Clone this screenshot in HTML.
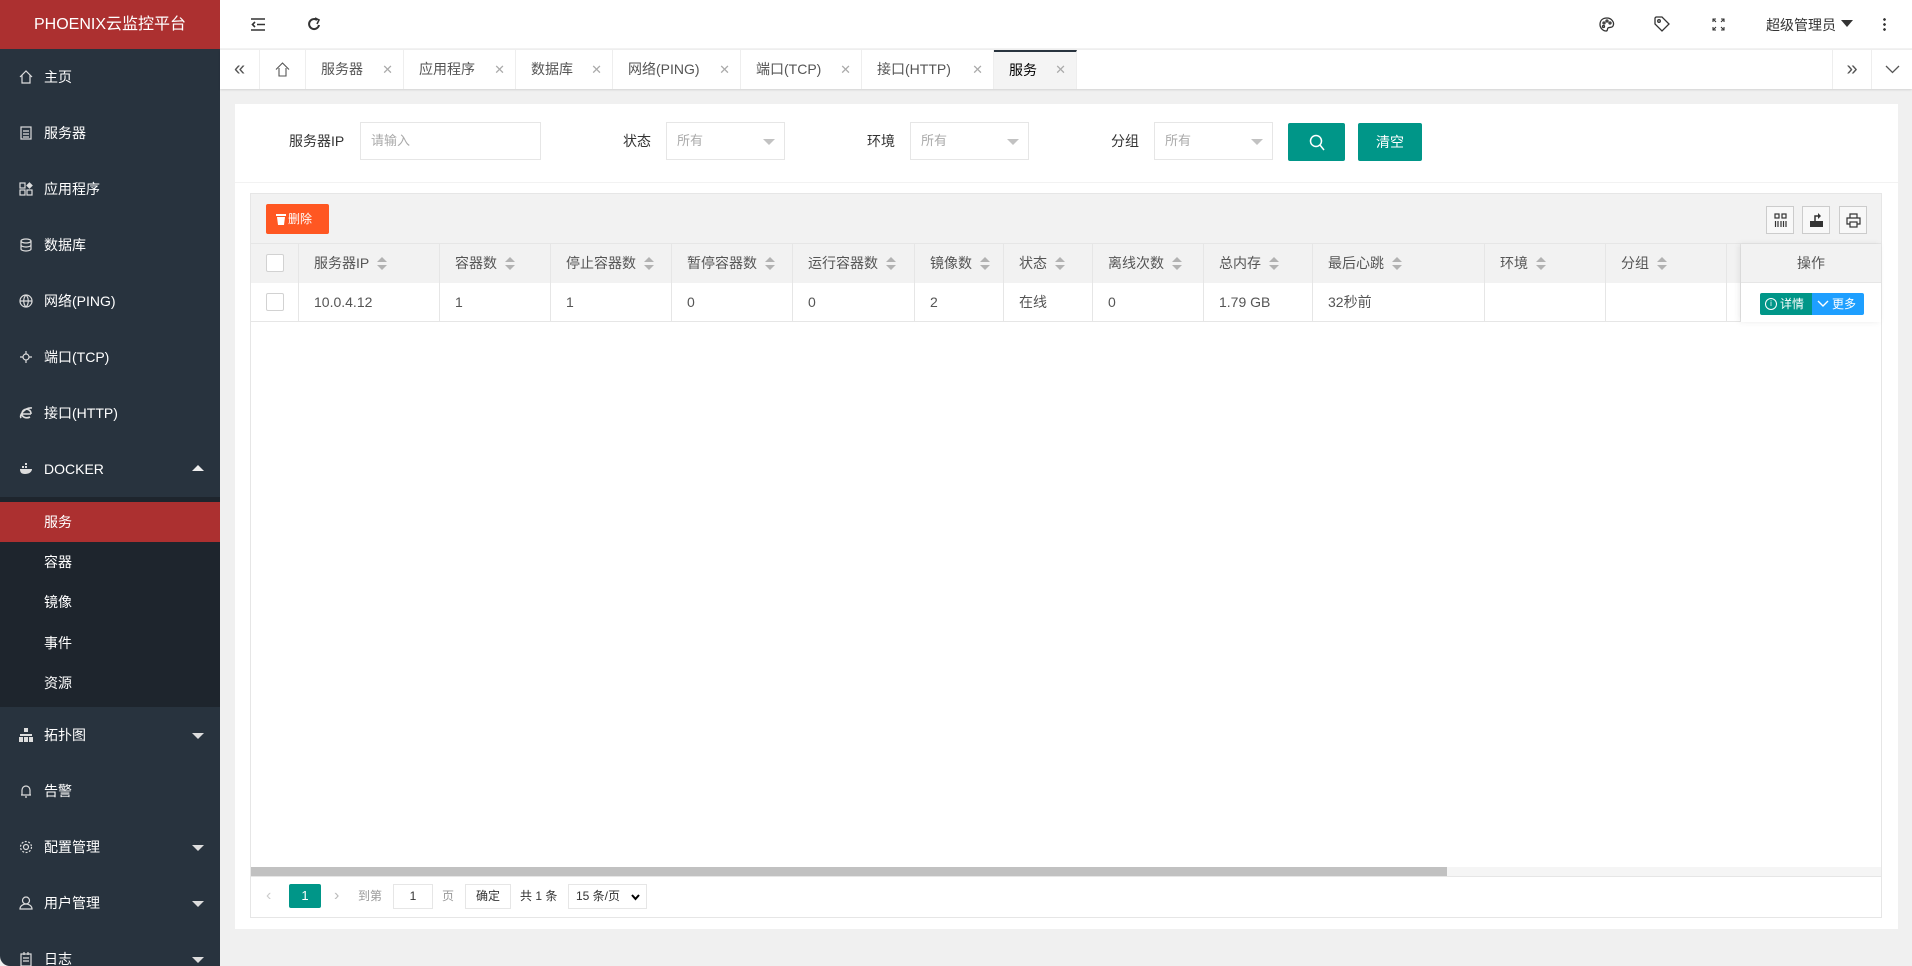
<!DOCTYPE html>
<html><head><meta charset="utf-8">
<style>
*{box-sizing:border-box;margin:0;padding:0}
body{width:1912px;height:966px;overflow:hidden;background:#f0f0f0;font-family:"Liberation Sans","Noto Sans CJK SC",sans-serif;font-size:14px;color:#333;position:relative}
.a{position:absolute}
#side{left:0;top:0;width:220px;height:966px;background:#28333e;border-radius:0 0 0 10px;overflow:hidden}
#logo{left:0;top:0;width:220px;height:49px;background:#ac3030;color:#fff;font-size:16px;text-align:center;line-height:49px}
.mi{position:absolute;left:0;width:220px;height:56px;line-height:56px;color:#fff;font-size:14px;padding-left:44px}
.mi svg{position:absolute;left:19px;top:21px}
.car{position:absolute;right:16px;top:26px;width:0;height:0;border-left:6px solid transparent;border-right:6px solid transparent;border-top:6px solid #ddd}
.car.up{border-top:none;border-bottom:6px solid #eee;top:24px}
#sub{left:0;top:497px;width:220px;height:210px;background:#1e252d}
.si{position:absolute;left:0;width:220px;height:40px;line-height:40px;padding-left:44px;color:#fff;font-size:14px}
#hdr{left:220px;top:0;width:1692px;height:49px;background:#fff;border-bottom:1px solid #f2f2f2}
#tabs{left:220px;top:50px;width:1692px;height:39px;background:#fff;box-shadow:0 1px 2px rgba(0,0,0,.12)}
.tb{position:absolute;top:0;height:39px;line-height:39px;border-right:1px solid #eee;color:#555;font-size:14px;padding-left:15px}
.tb .x{position:absolute;right:10px;color:#aaa;font-size:13px}
#card{left:235px;top:104px;width:1663px;height:825px;background:#fff}
.lbl{position:absolute;top:122px;line-height:38px;font-size:14px;color:#333}
.inp{position:absolute;top:122px;height:38px;border:1px solid #e6e6e6;line-height:36px;padding-left:10px;color:#aaa;font-size:13px;background:#fff}
.inp .tri{position:absolute;right:9px;top:16px;border-left:6px solid transparent;border-right:6px solid transparent;border-top:6px solid #c2c2c2}
.btn{position:absolute;top:123px;height:38px;background:#009688;color:#fff;border-radius:2px;text-align:center;line-height:38px;font-size:14px}
#tbl{left:250px;top:193px;width:1632px;height:725px;border:1px solid #e6e6e6;background:#fff}
.th{position:absolute;top:244px;height:39px;line-height:39px;font-size:14px;color:#555;padding-left:15px;border-right:1px solid #e6e6e6;background:#f2f2f2}
.td{position:absolute;top:283px;height:39px;line-height:39px;font-size:14px;color:#555;padding-left:15px;border-right:1px solid #e6e6e6;border-bottom:1px solid #e6e6e6}
.srt{display:inline-block;vertical-align:middle;margin-left:8px;width:10px;height:14px;position:relative}
.srt:before{content:"";position:absolute;left:0;top:0;border-left:5px solid transparent;border-right:5px solid transparent;border-bottom:5px solid #b2b2b2}
.srt:after{content:"";position:absolute;left:0;top:8px;border-left:5px solid transparent;border-right:5px solid transparent;border-top:5px solid #b2b2b2}
.cb{position:absolute;width:18px;height:18px;border:1px solid #d2d2d2;background:#fff;border-radius:2px}
.ti{position:absolute;top:206px;width:28px;height:28px;border:1px solid #ccc;background:#f8f8f8}
</style></head><body>
<div id="side" class="a">
<div id="logo" class="a">PHOENIX云监控平台</div>
<div class="mi" style="top:49px"><svg width="14" height="14" viewBox="0 0 14 14" fill="none" stroke="#ddd" stroke-width="1.2"><path d="M1 7L7 1l6 6M3 5v8h8V5"/></svg>主页</div>
<div class="mi" style="top:105px"><svg width="14" height="14" viewBox="0 0 14 14" fill="none" stroke="#ddd" stroke-width="1.2"><rect x="2" y="1" width="10" height="12"/><path d="M4 5h6M4 8h6M4 11h6"/></svg>服务器</div>
<div class="mi" style="top:161px"><svg width="14" height="14" viewBox="0 0 14 14" fill="none" stroke="#ddd" stroke-width="1.2"><rect x="1" y="1" width="5" height="5"/><rect x="1" y="8" width="5" height="5"/><rect x="8" y="8" width="5" height="5"/><path d="M10.5 1l2.5 2.5-2.5 2.5-2.5-2.5z" fill="#ddd"/></svg>应用程序</div>
<div class="mi" style="top:217px"><svg width="14" height="14" viewBox="0 0 14 14" fill="none" stroke="#ddd" stroke-width="1.2"><ellipse cx="7" cy="3" rx="5" ry="2"/><path d="M2 3v8c0 1 2 2 5 2s5-1 5-2V3M2 7c0 1 2 2 5 2s5-1 5-2"/></svg>数据库</div>
<div class="mi" style="top:273px"><svg width="14" height="14" viewBox="0 0 14 14" fill="none" stroke="#ddd" stroke-width="1.2"><circle cx="7" cy="7" r="6"/><path d="M1 7h12M7 1c-3 3-3 9 0 12M7 1c3 3 3 9 0 12"/></svg>网络(PING)</div>
<div class="mi" style="top:329px"><svg width="14" height="14" viewBox="0 0 14 14" fill="none" stroke="#ddd" stroke-width="1.2"><circle cx="7" cy="7" r="3"/><path d="M7 1v3M7 10v3M1 7h3M10 7h3"/></svg>端口(TCP)</div>
<div class="mi" style="top:385px"><svg width="14" height="14" viewBox="0 0 14 14" fill="none" stroke="#ddd" stroke-width="1.6"><path d="M12 8H3c0 3 4 5 8 3M3 8c0-4 4-6 7-4 2 1 2 3 2 4M2 12c-2-3 4-11 11-10"/></svg>接口(HTTP)</div>
<div class="mi" style="top:441px"><svg width="14" height="14" viewBox="0 0 14 14" fill="#ddd"><path d="M1 7h12c0 3-3 5-7 5S1 10 1 7zM3 4h2v2H3zM6 4h2v2H6zM6 1h2v2H6z"/></svg>DOCKER<span class="car up"></span></div>
<div id="sub" class="a">
<div class="si" style="top:5px;background:#ac3030">服务</div>
<div class="si" style="top:45px">容器</div>
<div class="si" style="top:85px">镜像</div>
<div class="si" style="top:126px">事件</div>
<div class="si" style="top:166px">资源</div>
</div>
<div class="mi" style="top:707px"><svg width="14" height="14" viewBox="0 0 14 14" fill="#ddd"><rect x="5" y="0" width="4" height="4"/><rect x="1" y="6" width="12" height="2"/><rect x="0" y="9" width="4" height="5"/><rect x="5" y="9" width="4" height="5"/><rect x="10" y="9" width="4" height="5"/></svg>拓扑图<span class="car"></span></div>
<div class="mi" style="top:763px"><svg width="14" height="14" viewBox="0 0 14 14" fill="none" stroke="#ddd" stroke-width="1.2"><path d="M3 11V6a4 4 0 018 0v5H2h10M6 13h2"/></svg>告警</div>
<div class="mi" style="top:819px"><svg width="14" height="14" viewBox="0 0 14 14" fill="none" stroke="#ddd" stroke-width="1.2"><circle cx="7" cy="7" r="2.5"/><circle cx="7" cy="7" r="5.5" stroke-dasharray="2 1.5"/></svg>配置管理<span class="car"></span></div>
<div class="mi" style="top:875px"><svg width="14" height="14" viewBox="0 0 14 14" fill="none" stroke="#ddd" stroke-width="1.2"><circle cx="7" cy="4.5" r="3.5"/><path d="M1 13c0-3 3-5 6-5s6 2 6 5z"/></svg>用户管理<span class="car"></span></div>
<div class="mi" style="top:931px"><svg width="14" height="14" viewBox="0 0 14 14" fill="none" stroke="#ddd" stroke-width="1.2"><rect x="2" y="2" width="10" height="12"/><path d="M5 0v3M9 0v3M4 6h6M4 9h6"/></svg>日志<span class="car"></span></div>
</div>

<div id="hdr" class="a">
<svg class="a" style="left:31px;top:18px" width="14" height="13" viewBox="0 0 14 13" fill="none" stroke="#333" stroke-width="1.6"><path d="M0 1h14M6 6.5h8M0 12h14M4 4L1.5 6.5 4 9"/></svg>
<svg class="a" style="left:87px;top:17px" width="14" height="15" viewBox="0 0 14 15" fill="none" stroke="#333" stroke-width="2"><path d="M12 8a5 5 0 11-2-5"/><path d="M8 1l4 2-2 4" stroke-width="1.6"/></svg>
<svg class="a" style="left:1379px;top:17px" width="16" height="15" viewBox="0 0 16 15" fill="none" stroke="#333" stroke-width="1.3"><path d="M8 1C3 1 1 4 1 7.5S4 14 7 14c2 0 1-2 2-3s4 0 5-2C16 5 12 1 8 1z"/><circle cx="5" cy="6" r="1"/><circle cx="8" cy="4" r="1"/><circle cx="11" cy="6" r="1"/><circle cx="4.5" cy="9.5" r="1"/></svg>
<svg class="a" style="left:1434px;top:16px" width="16" height="16" viewBox="0 0 16 16" fill="none" stroke="#333" stroke-width="1.3"><path d="M1 2v6l7 7 7-7-7-7H2z"/><circle cx="5" cy="5" r="1.3"/></svg>
<svg class="a" style="left:1492px;top:18px" width="13" height="13" viewBox="0 0 13 13" fill="none" stroke="#333" stroke-width="1.1"><path d="M1 4V1h3M9 1h3v3M12 9v3H9M4 12H1V9M1 1l3 3M12 1L9 4M12 12L9 9M1 12l3-3"/></svg>
<div class="a" style="left:1546px;top:15px;font-size:14px;color:#333">超级管理员</div>
<div class="a" style="left:1621px;top:20px;border-left:6px solid transparent;border-right:6px solid transparent;border-top:7px solid #333"></div>
<div class="a" style="left:1663px;top:17px;width:3px;height:15px;background:radial-gradient(circle,#333 1.2px,transparent 1.5px) 0 0/3px 5px"></div>
</div>

<div id="tabs" class="a">
<div class="tb" style="left:0;width:40px;padding:0;text-align:center;font-size:20px;color:#555">«</div>
<div class="tb" style="left:40px;width:46px;padding:0"><svg style="position:absolute;left:15px;top:12px" width="15" height="15" viewBox="0 0 15 15" fill="none" stroke="#555" stroke-width="1.1"><path d="M1 7.5L7.5 1 14 7.5M4 6v8h7V6"/></svg></div>
<div class="tb" style="left:86px;width:98px">服务器<span class="x">✕</span></div>
<div class="tb" style="left:184px;width:112px">应用程序<span class="x">✕</span></div>
<div class="tb" style="left:296px;width:97px">数据库<span class="x">✕</span></div>
<div class="tb" style="left:393px;width:128px">网络(PING)<span class="x">✕</span></div>
<div class="tb" style="left:521px;width:121px">端口(TCP)<span class="x">✕</span></div>
<div class="tb" style="left:642px;width:132px">接口(HTTP)<span class="x">✕</span></div>
<div class="tb" style="left:774px;width:83px;background:#f4f4f4;color:#000;border-top:2px solid #28333e;line-height:36px">服务<span class="x">✕</span></div>
<div class="tb" style="left:1612px;width:40px;padding:0;text-align:center;font-size:20px;border-left:1px solid #eee">»</div>
<div class="tb" style="left:1652px;width:40px;padding:0;border:none"><svg style="position:absolute;left:13px;top:15px" width="15" height="9" viewBox="0 0 15 9" fill="none" stroke="#555" stroke-width="1.3"><path d="M1 1l6.5 6.5L14 1"/></svg></div>
</div>

<div id="card" class="a"></div>
<div class="a" style="left:235px;top:182px;width:1663px;height:1px;background:#f2f2f2"></div>
<div class="lbl" style="left:289px">服务器IP</div>
<div class="inp" style="left:360px;width:181px">请输入</div>
<div class="lbl" style="left:623px">状态</div>
<div class="inp" style="left:666px;width:119px">所有<span class="tri"></span></div>
<div class="lbl" style="left:867px">环境</div>
<div class="inp" style="left:910px;width:119px">所有<span class="tri"></span></div>
<div class="lbl" style="left:1111px">分组</div>
<div class="inp" style="left:1154px;width:119px">所有<span class="tri"></span></div>
<div class="btn" style="left:1288px;width:57px"><svg style="position:absolute;left:21px;top:11px" width="16" height="17" viewBox="0 0 16 17" fill="none" stroke="#fff" stroke-width="1.5"><circle cx="7" cy="7" r="5.5"/><path d="M11 11l4 5"/></svg></div>
<div class="btn" style="left:1358px;width:64px">清空</div>

<div id="tbl" class="a"></div>
<div class="a" style="left:251px;top:194px;width:1630px;height:50px;background:#f2f2f2;border-bottom:1px solid #e6e6e6"></div>
<div class="a" style="left:266px;top:204px;width:63px;height:30px;background:#ff5722;border-radius:2px;color:#fff;font-size:12px;line-height:30px;padding-left:22px"><svg style="position:absolute;left:10px;top:9px" width="10" height="12" viewBox="0 0 10 12" fill="#fff"><rect x="0" y="1" width="10" height="2"/><path d="M1 4h8l-1 8H2z"/></svg>删除</div>
<div class="ti" style="left:1766px"><svg style="position:absolute;left:7px;top:6px" width="13" height="15" viewBox="0 0 13 15" fill="none" stroke="#333" stroke-width="1.2"><rect x="1" y="1" width="4" height="4"/><rect x="8" y="1" width="4" height="4"/><path d="M1.5 8v6M4 8v6M7 8v6M9.5 8v6M12 8v6"/></svg></div>
<div class="ti" style="left:1802px"><svg style="position:absolute;left:6px;top:6px" width="15" height="15" viewBox="0 0 15 15" fill="#333"><path d="M1 8h13v6H1z"/><path d="M6 8V3h4" fill="none" stroke="#333" stroke-width="1.5"/><path d="M9 0l3 3-3 3z"/></svg></div>
<div class="ti" style="left:1839px"><svg style="position:absolute;left:6px;top:6px" width="15" height="15" viewBox="0 0 15 15" fill="none" stroke="#333" stroke-width="1.2"><path d="M4 5V1h7v4M4 11H1V5h13v6h-3"/><rect x="4" y="9" width="7" height="5"/></svg></div>

<div class="th" style="left:251px;width:48px;padding:0"><span class="cb" style="left:15px;top:10px"></span></div>
<div class="th" style="left:299px;width:141px">服务器IP<span class="srt"></span></div>
<div class="th" style="left:440px;width:111px">容器数<span class="srt"></span></div>
<div class="th" style="left:551px;width:121px">停止容器数<span class="srt"></span></div>
<div class="th" style="left:672px;width:121px">暂停容器数<span class="srt"></span></div>
<div class="th" style="left:793px;width:122px">运行容器数<span class="srt"></span></div>
<div class="th" style="left:915px;width:89px">镜像数<span class="srt"></span></div>
<div class="th" style="left:1004px;width:89px">状态<span class="srt"></span></div>
<div class="th" style="left:1093px;width:111px">离线次数<span class="srt"></span></div>
<div class="th" style="left:1204px;width:109px">总内存<span class="srt"></span></div>
<div class="th" style="left:1313px;width:172px">最后心跳<span class="srt"></span></div>
<div class="th" style="left:1485px;width:121px">环境<span class="srt"></span></div>
<div class="th" style="left:1606px;width:121px">分组<span class="srt"></span></div>
<div class="th" style="left:1727px;width:14px;padding:0"></div>

<div class="td" style="left:251px;width:48px;padding:0"><span class="cb" style="left:15px;top:10px"></span></div>
<div class="td" style="left:299px;width:141px">10.0.4.12</div>
<div class="td" style="left:440px;width:111px">1</div>
<div class="td" style="left:551px;width:121px">1</div>
<div class="td" style="left:672px;width:121px">0</div>
<div class="td" style="left:793px;width:122px">0</div>
<div class="td" style="left:915px;width:89px">2</div>
<div class="td" style="left:1004px;width:89px">在线</div>
<div class="td" style="left:1093px;width:111px">0</div>
<div class="td" style="left:1204px;width:109px">1.79 GB</div>
<div class="td" style="left:1313px;width:172px">32秒前</div>
<div class="td" style="left:1485px;width:121px"></div>
<div class="td" style="left:1606px;width:121px"></div>
<div class="td" style="left:1727px;width:14px;padding:0"></div>

<div class="a" style="left:1741px;top:244px;width:140px;height:78px;background:#fff;box-shadow:-2px 0 6px rgba(0,0,0,.08)">
<div style="height:39px;background:#f2f2f2;border-bottom:1px solid #e6e6e6;text-align:center;line-height:39px;color:#555">操作</div>
<div style="position:absolute;left:19px;top:49px;width:52px;height:22px;background:#009688;color:#fff;font-size:12px;line-height:22px;padding-left:20px;border-radius:2px 0 0 2px"><span style="position:absolute;left:5px;top:5px;width:12px;height:12px;border:1px solid #fff;border-radius:50%;font-size:8px;line-height:10px;text-align:center">i</span>详情</div>
<div style="position:absolute;left:71px;top:49px;width:52px;height:22px;background:#1e9fff;color:#fff;font-size:12px;line-height:22px;padding-left:20px;border-radius:0 2px 2px 0"><svg style="position:absolute;left:5px;top:7px" width="12" height="8" viewBox="0 0 12 8" fill="none" stroke="#fff" stroke-width="1.4"><path d="M1 1l5 5 5-5"/></svg>更多</div>
</div>

<div class="a" style="left:251px;top:867px;width:1630px;height:9px;background:#f5f5f5"></div>
<div class="a" style="left:251px;top:867px;width:1196px;height:9px;background:#c1c1c1"></div>
<div class="a" style="left:251px;top:876px;width:1630px;height:1px;background:#e6e6e6"></div>

<div class="a" style="left:266px;top:884px;color:#ccc;font-size:16px;line-height:24px">‹</div>
<div class="a" style="left:289px;top:884px;width:32px;height:24px;background:#009688;color:#fff;text-align:center;line-height:24px;font-size:13px;border-radius:2px">1</div>
<div class="a" style="left:334px;top:884px;color:#bbb;font-size:16px;line-height:24px">›</div>
<div class="a" style="left:358px;top:884px;color:#999;font-size:12px;line-height:24px">到第</div>
<div class="a" style="left:393px;top:884px;width:40px;height:25px;border:1px solid #e6e6e6;text-align:center;line-height:23px;font-size:12px">1</div>
<div class="a" style="left:442px;top:884px;color:#999;font-size:12px;line-height:24px">页</div>
<div class="a" style="left:465px;top:884px;width:46px;height:25px;border:1px solid #e6e6e6;text-align:center;line-height:23px;font-size:12px">确定</div>
<div class="a" style="left:520px;top:884px;color:#333;font-size:12px;line-height:24px">共 1 条</div>
<div class="a" style="left:568px;top:884px;width:79px;height:25px;border:1px solid #e6e6e6;font-size:12px;line-height:23px;padding-left:7px">15 条/页<svg style="position:absolute;right:6px;top:9px" width="9" height="7" viewBox="0 0 9 7" fill="none" stroke="#000" stroke-width="2"><path d="M1 1l3.5 4L8 1"/></svg></div>
</body></html>
